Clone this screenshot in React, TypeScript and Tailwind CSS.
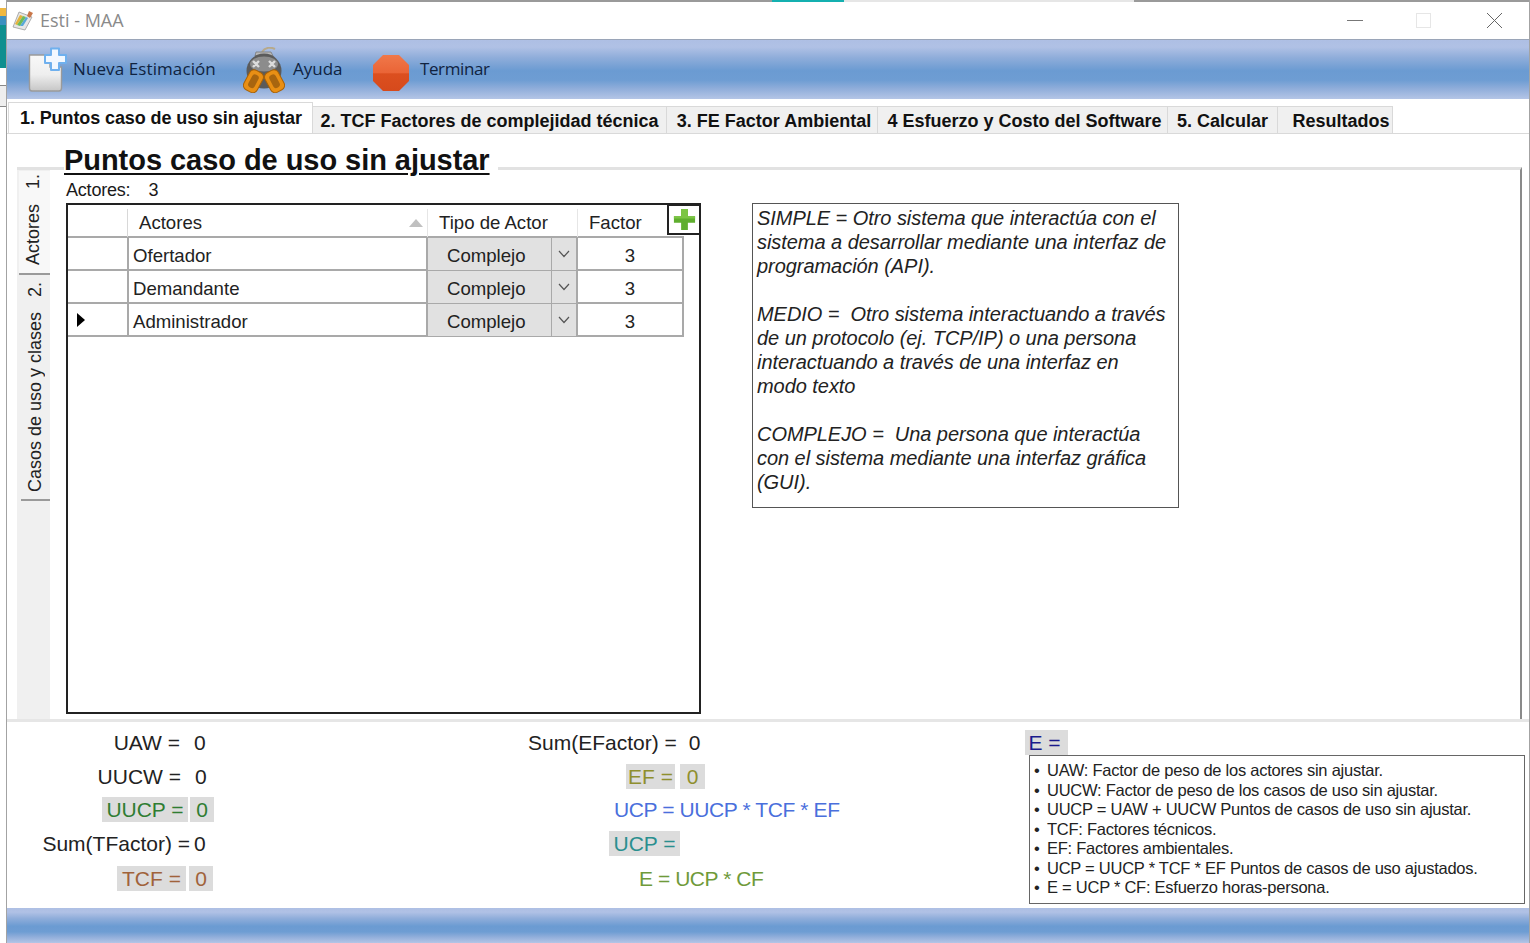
import React from "react";

const sans = "font-['Liberation_Sans',Arial,sans-serif]";
const bar = "bg-[linear-gradient(180deg,#aebfe4_0%,#b0c1e5_12%,#8fadda_30%,#6b9bd2_52%,#6e9dd3_68%,#8fadda_82%,#b4c5e6_100%)]";

function NewDocIcon() {
  return (
    <svg width="40" height="46" viewBox="0 0 40 46">
      <defs>
        <linearGradient id="doc" x1="0" y1="0" x2="0" y2="1">
          <stop offset="0" stopColor="#f8f8f8" />
          <stop offset="0.55" stopColor="#eeeeee" />
          <stop offset="1" stopColor="#c6c6c6" />
        </linearGradient>
      </defs>
      <path d="M1.5 8 H22 V20 H33.5 V41 Q33.5 44 31 44 H4 Q1.5 44 1.5 41 Z" fill="url(#doc)" stroke="#9a9a9a" strokeWidth="1.4" />
      <path d="M23 1.5 H31 V8 H38 V16 H31 V23 H23 V16 H17 V8 H23 Z" fill="#f2f8ff" stroke="#6fb0ee" strokeWidth="2" strokeLinejoin="round" />
    </svg>
  );
}

function MaskIcon() {
  return (
    <svg width="42" height="46" viewBox="0 0 42 46">
      <path d="M19 5 C22 0 28 0 32 2" fill="none" stroke="#b7a98a" strokeWidth="2" />
      <path d="M13 5 L28 5 L30 9 L12 9 Z" fill="#b9b9b9" stroke="#777" strokeWidth="0.8" />
      <circle cx="21" cy="24" r="17.5" fill="#5b5b5b" />
      <ellipse cx="21" cy="17" rx="14" ry="7.5" fill="#8c8c8c" />
      <path d="M10 14 l6 6 M16 14 l-6 6 M26 14 l6 6 M32 14 l-6 6" stroke="#dcdcdc" strokeWidth="2.4" />
      <g transform="rotate(28 10 34)">
        <rect x="3" y="23" width="15" height="22" rx="5" fill="#e98f14" stroke="#a96207" strokeWidth="1" />
        <rect x="7" y="27" width="7" height="14" rx="3" fill="#a8650f" />
      </g>
      <g transform="rotate(-28 32 34)">
        <rect x="24" y="23" width="15" height="22" rx="5" fill="#e98f14" stroke="#a96207" strokeWidth="1" />
        <rect x="28" y="27" width="7" height="14" rx="3" fill="#a8650f" />
      </g>
    </svg>
  );
}

function StopIcon() {
  return (
    <svg width="38" height="38" viewBox="0 0 38 38">
      <defs>
        <linearGradient id="stop" x1="0" y1="0" x2="0" y2="1">
          <stop offset="0" stopColor="#f0784a" />
          <stop offset="0.5" stopColor="#ea6436" />
          <stop offset="0.52" stopColor="#dc4f1f" />
          <stop offset="1" stopColor="#d64a1c" />
        </linearGradient>
      </defs>
      <path d="M11 1 H27 L37 11 V27 L27 37 H11 L1 27 V11 Z" fill="url(#stop)" />
    </svg>
  );
}

function AppIcon() {
  return (
    <svg width="22" height="22" viewBox="0 0 22 22">
      <path d="M7 2 L20 7 L13 20 L1 17 Z" fill="#e6e6e6" stroke="#9b9b9b" strokeWidth="0.8" />
      <path d="M8 5 L11 6 L5 15 L3 14 Z" fill="#e3b23c" />
      <path d="M11 6 L14 7 L8 16 L5 15 Z" fill="#6dbb58" />
      <path d="M14 7 L16 8 L11 16 L8 16 Z" fill="#58a8d8" />
      <path d="M17 1 L21 3 L18 8 L15 6 Z" fill="#c9774a" />
    </svg>
  );
}

function PlusIcon() {
  return (
    <svg width="25" height="25" viewBox="0 0 26 26">
      <path d="M9.5 2 H16.5 V9.5 H24 V16.5 H16.5 V24 H9.5 V16.5 H2 V9.5 H9.5 Z" fill="#5fae2e" />
      <path d="M9.5 2 H16.5 V9.5 H24 V12 H2 V9.5 H9.5 Z" fill="#7cc544" />
    </svg>
  );
}

function Chevron() {
  return (
    <svg width="12" height="8" viewBox="0 0 12 8">
      <path d="M1 1 L6 6.5 L11 1" fill="none" stroke="#555" strokeWidth="1.2" />
    </svg>
  );
}

const tabs = [
  { label: "2. TCF Factores de complejidad técnica", w: "w-[354px]" },
  { label: "3. FE Factor Ambiental", w: "w-[211px] pl-[4px]" },
  { label: "4 Esfuerzo y Costo del Software", w: "w-[290px] pl-[4px]" },
  { label: "5. Calcular", w: "w-[110px]" },
  { label: "Resultados", w: "w-[115px] pl-[12px]" },
];

const rows = ["Ofertador", "Demandante", "Administrador"];

const info = [
  "SIMPLE = Otro sistema que interactúa con el",
  "sistema a desarrollar mediante una interfaz de",
  "programación (API).",
  " ",
  "MEDIO =  Otro sistema interactuando a través",
  "de un protocolo (ej. TCP/IP) o una persona",
  "interactuando a través de una interfaz en",
  "modo texto",
  " ",
  "COMPLEJO =  Una persona que interactúa",
  "con el sistema mediante una interfaz gráfica",
  "(GUI).",
];

const legend = [
  "UAW: Factor de peso de los actores sin ajustar.",
  "UUCW: Factor de peso de los casos de uso sin ajustar.",
  "UUCP = UAW + UUCW Puntos de casos de uso sin ajustar.",
  "TCF: Factores técnicos.",
  "EF: Factores ambientales.",
  "UCP = UUCP * TCF * EF Puntos de casos de uso ajustados.",
  "E = UCP * CF: Esfuerzo horas-persona.",
];

function Chip({ children, className = "" }: { children: React.ReactNode; className?: string }) {
  return <span className={`flex h-[25px] items-center justify-center bg-[#dcdcdc] ${className}`}>{children}</span>;
}

export default function App() {
  return (
    <div className={`flex h-[943px] w-[1530px] overflow-hidden bg-white text-[#1a1a1a] ${sans}`}>
      {/* desktop peeking at left */}
      <div className="flex w-[6px] shrink-0 flex-col">
        <div className="h-[8px] bg-white" />
        <div className="h-[8px] bg-[#f0b840]" />
        <div className="h-[9px] bg-[#3c8fc0]" />
        <div className="h-[43px] bg-[#0f8f8f]" />
        <div className="h-[17px] bg-white" />
        <div className="h-[22px] border-y border-[#888] bg-[#eeeeee]" />
        <div className="flex-1 bg-white" />
      </div>

      {/* window */}
      <div className="flex min-w-0 flex-1 flex-col border-x border-[#a3a3a3]">
        <div className="flex h-[2px] shrink-0 bg-[#9a9a9a]">
          <div className="w-[765px]" />
          <div className="w-[72px] bg-[#14b0b0]" />
          <div className="w-[290px] bg-[#e6e6e6]" />
        </div>

        {/* title bar */}
        <div className="flex h-[38px] shrink-0 items-center justify-between border-b border-[#9aa5b8] pl-[5px] pr-[26px]">
          <div className="flex items-center gap-[6px]">
            <AppIcon />
            <span className="font-['Open_Sans',sans-serif] text-[18px] text-[#8a8a8a]">Esti - MAA</span>
          </div>
          <div className="flex items-center">
            <div className="h-px w-[16px] bg-[#777]" />
            <div className="ml-[53px] h-[15px] w-[15px] border border-[#e6e6e6]" />
            <svg className="ml-[55px]" width="17" height="17" viewBox="0 0 17 17">
              <path d="M1 1 L16 16 M16 1 L1 16" stroke="#666" strokeWidth="1" />
            </svg>
          </div>
        </div>

        {/* toolbar */}
        <div className={`flex h-[59px] shrink-0 items-center pl-[21px] font-['Open_Sans',sans-serif] text-[17px] text-[#10233f] ${bar}`}>
          <NewDocIcon />
          <span className="mb-[2px] ml-[5px] w-[170px] tracking-[0.1px]">Nueva Estimación</span>
          <MaskIcon />
          <span className="mb-[2px] ml-[8px] w-[79px]">Ayuda</span>
          <div className="mt-[6px] flex"><StopIcon /></div>
          <span className="mb-[2px] ml-[10px] tracking-[-0.4px]">Terminar</span>
        </div>

        {/* tabs */}
        <div className="flex h-[35px] shrink-0 items-end border-b border-[#d9d9d9] pl-px text-[18px] font-bold text-[#111]">
          <div className="flex h-[31px] w-[305px] items-start whitespace-nowrap border-x border-t border-[#d9d9d9] bg-white pl-[11px] pt-[2px] tracking-[-0.1px]">
            1. Puntos caso de uso sin ajustar
          </div>
          {tabs.map((t) => (
            <div key={t.label} className={`flex h-[27px] items-center justify-center whitespace-nowrap border-r border-t border-[#d9d9d9] bg-[#f0f0f0] pt-[3px] ${t.w}`}>
              {t.label}
            </div>
          ))}
        </div>

        {/* page */}
        <div className="flex h-[588px] shrink-0 flex-col border-b-[3px] border-[#e6e6e6] pl-[10px] pr-[7px]">
          <h1 className="relative z-10 -mb-[9px] ml-[47px] mt-[10px] w-fit bg-white pr-[8px] text-[29px] font-bold leading-[32px] tracking-[-0.05px] text-[#111]">
            <span className="underline decoration-[2px] underline-offset-[3px]">Puntos caso de uso sin ajustar</span>
          </h1>
          <div className="flex min-h-0 flex-1 border-r-2 border-t-[3px] border-[#e2e2e2] border-r-[#8a8a8a]">
            {/* side tabs */}
            <div className="flex w-[33px] shrink-0 flex-col items-end bg-[#f0f0f0] pt-[1px] text-[18px] text-[#222]">
              <div className="flex h-[104px] w-[31px] items-center justify-center border-b-2 border-[#9a9a9a] bg-[#f8f8f8] pb-[4px] pr-[3px]">
                <span className="rotate-180 whitespace-pre [writing-mode:vertical-rl]">{"Actores   1."}</span>
              </div>
              <div className="flex h-[226px] w-[29px] items-center justify-center border-b-2 border-[#9a9a9a] pr-[1px]">
                <span className="rotate-180 whitespace-pre [writing-mode:vertical-rl]">{"Casos de uso y clases   2."}</span>
              </div>
            </div>

            <div className="flex min-w-0 flex-1 flex-col pl-[16px]">
              <div className="flex h-[33px] shrink-0 items-end gap-[18px] text-[18px] leading-[25px] tracking-[-0.2px]">
                <span>Actores:</span>
                <span>3</span>
              </div>
              <div className="flex min-h-0">
                {/* grid */}
                <div className="relative h-[511px] w-[635px] shrink-0 border-2 border-[#222] bg-white text-[18.6px] text-[#222]">
                  <div className="grid h-[33px] w-[616px] grid-cols-[60px_300px_150px_106px] border-b-2 border-[#a9a9a9] pt-[4px]">
                    <div className="border-r border-[#d8d8d8]" />
                    <div className="flex items-center justify-between border-r border-[#e6e6e6] pl-[11px] pr-[4px]">
                      <span>Actores</span>
                      <span className="h-0 w-0 border-x-[7px] border-b-[8px] border-x-transparent border-b-[#c0c0c0]" />
                    </div>
                    <div className="flex items-center border-r border-[#e6e6e6] pl-[11px]">Tipo de Actor</div>
                    <div className="flex items-center pl-[11px]">Factor</div>
                  </div>
                  {rows.map((r, i) => (
                    <div key={r} className="grid h-[33px] w-[616px] grid-cols-[59px_301px_150px_106px] border-b-2 border-[#a9a9a9]">
                      <div className="flex items-center pl-[9px]">
                        {i === 2 && <span className="h-0 w-0 border-y-[7px] border-l-[8px] border-y-transparent border-l-black" />}
                      </div>
                      <div className="flex items-center border-x-2 border-[#a9a9a9] pl-[4px] pt-[4px]">{r}</div>
                      <div className="flex border-r-2 border-[#a9a9a9] bg-[#e1e1e1]">
                        <div className="flex flex-1 items-center border-r border-[#a9a9a9] pl-[19px] pt-[4px]">Complejo</div>
                        <div className="flex w-[24px] items-center justify-center"><Chevron /></div>
                      </div>
                      <div className="flex items-center justify-center border-r-2 border-[#a9a9a9] pt-[4px]">3</div>
                    </div>
                  ))}
                  <div className="absolute -top-[1px] right-[-2px] flex h-[31px] w-[34px] items-center justify-center border-2 border-[#222] bg-white">
                    <PlusIcon />
                  </div>
                </div>

                {/* info */}
                <div className="ml-[51px] h-[305px] w-[427px] shrink-0 border border-[#555] pl-[4px] pt-[2px] text-[20px] italic leading-[24px] tracking-[-0.05px] text-[#222]">
                  {info.map((l, i) => (
                    <div key={i} className="h-[24px] whitespace-pre">{l}</div>
                  ))}
                </div>
              </div>
            </div>
          </div>
        </div>

        {/* summary */}
        <div className="flex min-h-0 flex-1 text-[21px] leading-none text-[#222]">
          <div className="flex w-[207px] shrink-0 flex-col pt-[3px]">
            <div className="flex h-[34px] items-center justify-end pr-[6px]"><span>UAW =</span><span className="ml-[14px] w-[14px]">0</span></div>
            <div className="flex h-[34px] items-center justify-end pr-[5px]"><span>UUCW =</span><span className="ml-[14px] w-[14px]">0</span></div>
            <div className="flex h-[33px] items-center justify-end text-[#2f7d32]">
              <Chip className="w-[86px]">UUCP =</Chip>
              <Chip className="ml-[2px] w-[24px]">0</Chip>
            </div>
            <div className="flex h-[35px] items-center justify-end pr-[6px]"><span>Sum(TFactor) =</span><span className="ml-[4px] w-[14px]">0</span></div>
            <div className="flex h-[34px] items-center justify-end pr-[1px] text-[#a0623a]">
              <Chip className="w-[69px]">TCF =</Chip>
              <Chip className="ml-[3px] w-[24px]">0</Chip>
            </div>
          </div>

          <div className="flex w-[811px] shrink-0 flex-col pt-[3px]">
            <div className="ml-[314px] flex h-[34px] items-center"><span>Sum(EFactor) =</span><span className="ml-[12px]">0</span></div>
            <div className="ml-[412px] flex h-[34px] items-center text-[#8f8f2e]">
              <Chip className="w-[49px]">EF =</Chip>
              <Chip className="ml-[5px] w-[25px]">0</Chip>
            </div>
            <div className="ml-[400px] flex h-[33px] items-center tracking-[-0.4px] text-[#4a6fdc]">UCP = UUCP * TCF * EF</div>
            <div className="ml-[395px] flex h-[35px] items-center text-[#2a8f8f]">
              <Chip className="w-[71px]">UCP =</Chip>
            </div>
            <div className="ml-[425px] flex h-[34px] items-center tracking-[-0.45px] text-[#6f9a3a]">E = UCP * CF</div>
          </div>

          <div className="flex min-w-0 flex-1 flex-col pt-[8px]">
            <Chip className="w-[43px] pr-[4px] text-[#1a1a8c]">E =</Chip>
            <div className="ml-[4px] h-[149px] w-[496px] border border-[#666] pl-[4px] pt-[5px] text-[16.5px] leading-[19.5px] tracking-[-0.25px]">
              {legend.map((l) => (
                <div key={l} className="flex whitespace-nowrap">
                  <span className="w-[13px]">•</span>
                  <span>{l}</span>
                </div>
              ))}
            </div>
          </div>
        </div>

        {/* status bar */}
        <div className={`h-[35px] shrink-0 ${bar}`} />
      </div>
    </div>
  );
}
